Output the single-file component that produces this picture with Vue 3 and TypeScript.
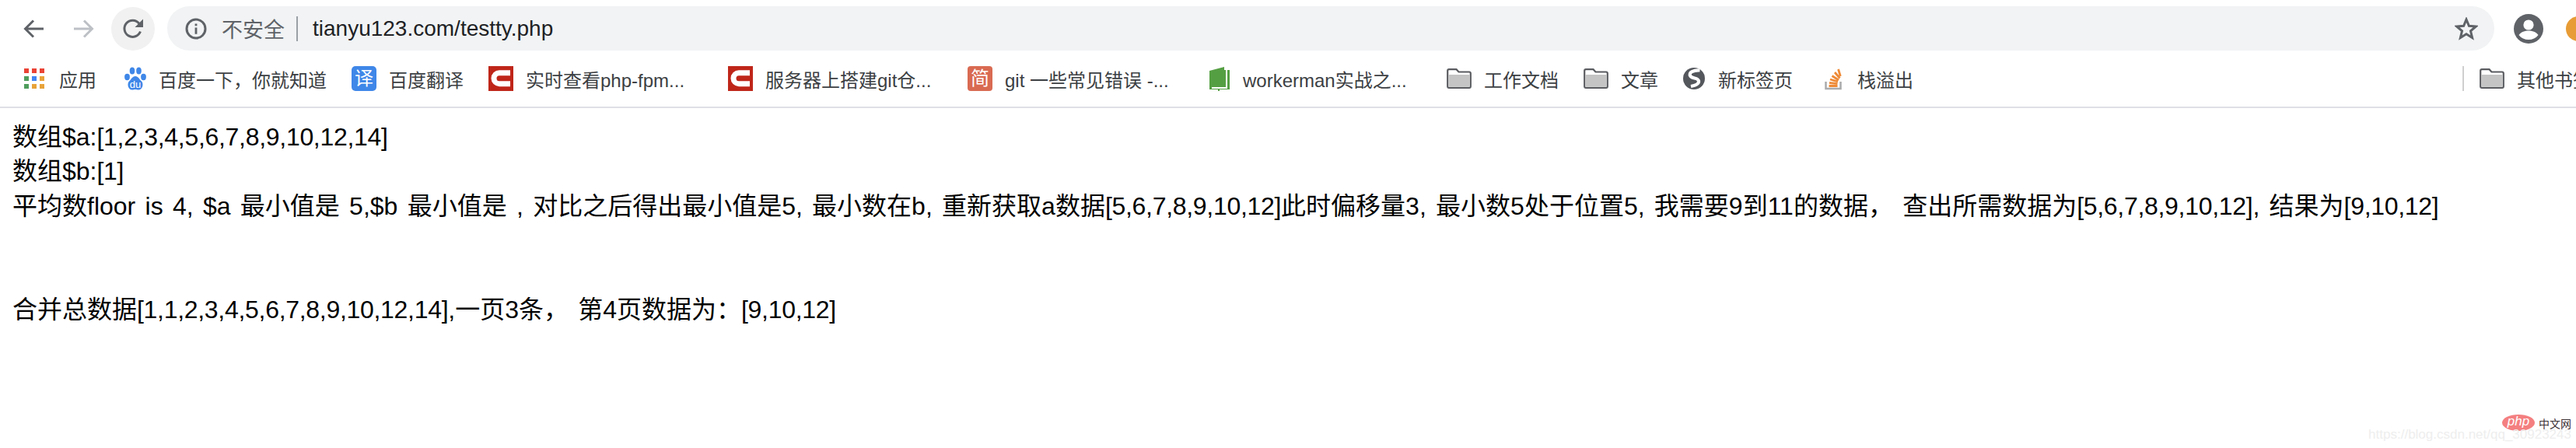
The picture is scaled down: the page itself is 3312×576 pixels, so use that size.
<template>
  <div class="window">
    <div class="toolbar">
      <button class="nav-btn">
        <svg width="28" height="28" viewBox="0 0 28 28"><path d="M26 14H3M13 3.5 2.5 14 13 24.5" fill="none" stroke="#5f6368" stroke-width="3" /></svg>
      </button>
      <button class="nav-btn">
        <svg width="28" height="28" viewBox="0 0 28 28"><path d="M2 14h23M15 3.5 25.5 14 15 24.5" fill="none" stroke="#bdc1c6" stroke-width="3" /></svg>
      </button>
      <button class="nav-btn reload">
        <svg width="28" height="28" viewBox="0 0 28 28">
          <path d="M23.5 17.5a10.6 10.6 0 1 1-1.6-10.3" fill="none" stroke="#5f6368" stroke-width="3" />
          <path d="M27 1.5V12H16.5z" fill="#5f6368" />
        </svg>
      </button>
      <div class="omnibox">
        <svg class="info" width="28" height="28" viewBox="0 0 28 28">
          <circle cx="14" cy="14" r="12" fill="none" stroke="#5f6368" stroke-width="3" />
          <path d="M12.6 12.5h2.8v8.2h-2.8zM12.6 7.4h2.8v2.8h-2.8z" fill="#5f6368" />
        </svg>
        <span class="insecure">不安全</span>
        <i class="divider"></i>
        <span class="url">tianyu123.com/testty.php</span>
        <svg class="star" width="30" height="30" viewBox="0 0 30 30">
          <path d="m15 3 3.4 8.3 8.9.7-6.8 5.8 2.1 8.7-7.6-4.7-7.6 4.7 2.1-8.7L2.7 12l8.9-.7z" fill="none" stroke="#5f6368" stroke-width="3" />
        </svg>
      </div>
      <svg class="avatar" width="38" height="38" viewBox="0 0 38 38">
        <circle cx="19" cy="19" r="19" fill="#5f6368" />
        <circle cx="19" cy="14" r="6.6" fill="#fff" />
        <path d="M6.5 27c2.5-4 8-5.6 12.5-5.6S29 23 31.500 27c-3 4-7.500 6-12.500 6s-9.500-2-12.500-6z" fill="#fff" />
      </svg>
      <div class="ext-dot"></div>
    </div>

    <div class="bookmarks">
      <div v-for="item in bookmarks" :key="item.label" class="bookmark" :style="{ width: item.width + 'px' }">
        <span class="bm-icon">
          <svg v-if="item.icon === 'apps'" class="apps" width="26" height="26" viewBox="0 0 26 26">
            <rect
              v-for="cell in appCells"
              :key="cell.x + '-' + cell.y"
              :x="cell.x"
              :y="cell.y"
              width="6"
              height="6"
              :fill="cell.color"
            />
          </svg>
          <svg v-else-if="item.icon === 'baidu'" width="28" height="32" viewBox="0 0 28 32">
            <g fill="#3f87e8">
              <ellipse cx="3.500" cy="14" rx="3.400" ry="4.200" />
              <ellipse cx="10" cy="6" rx="3.300" ry="4.500" />
              <ellipse cx="18.500" cy="6" rx="3.300" ry="4.500" />
              <ellipse cx="24.500" cy="14" rx="3.400" ry="4.200" />
              <path d="M14 13c4 0 5 4 8 6.500 3 3 1.500 11-4 11-1.500 0-2.500-.6-4-.6s-2.500.6-4 .6c-5.500 0-7-8-4-11C9 17 10 13 14 13z" />
            </g>
            <text x="14" y="28" text-anchor="middle" class="du">du</text>
          </svg>
          <span v-else-if="item.icon === 'fanyi'" class="fanyi">译</span>
          <svg v-else-if="item.icon === 'csdn'" width="32" height="32" viewBox="0 0 32 32">
            <rect width="32" height="32" fill="#bf2619" />
            <path d="M28 8.700H14a7 7 0 0 0 0 14h14" fill="none" stroke="#fff" stroke-width="7" />
          </svg>
          <span v-else-if="item.icon === 'jian'" class="jian">简</span>
          <svg v-else-if="item.icon === 'book'" width="28" height="32" viewBox="0 0 28 32">
            <path d="M1 6 20 1v4h2v22H1z" fill="#559f43" />
            <path d="M24 5h3v25H14v2h-2v-2H1v-3h23z" fill="#559f43" />
            <path d="M4 27h20v2H4z" fill="#fff" />
          </svg>
          <svg v-else-if="item.icon === 'folder'" width="32" height="26" viewBox="0 0 32 26">
            <path d="M1.200 3c0-1 .8-1.800 1.800-1.800h9.500L15.500 4.500H29c1 0 1.800.8 1.800 1.800V23c0 1-.8 1.800-1.800 1.800H3c-1 0-1.800-.8-1.800-1.800z" fill="#fff" stroke="#5a5c60" stroke-width="2.200" />
            <path d="M2.300 8h27.400v15.700H2.300z" fill="#c4c4c4" />
          </svg>
          <svg v-else-if="item.icon === 'globe'" width="30" height="30" viewBox="0 0 30 30">
            <circle cx="15" cy="15" r="14" fill="#54575c" />
            <path d="M22.500 4.500C15 4 7 7 10.500 12c2.500 3.500 9.500 1.500 10.500 6 .8 4-5 6-10 7" fill="none" stroke="#fff" stroke-width="4.200" />
          </svg>
          <svg v-else width="30" height="32" viewBox="0 0 30 32">
            <path d="M5.500 20v9h19v-9" fill="none" stroke="#aaabad" stroke-width="2.500" />
            <path d="M9.500 25.500h11M10 21.500l10.500 1.200M11 17l10 3M13.500 12.500l8.500 5.500M17 8l6.500 7.500M21.500 4l2.800 9" fill="none" stroke="#ee8a36" stroke-width="2.800" />
          </svg>
        </span>
        <span class="bm-label">{{ item.label }}</span>
      </div>
      <div class="bm-spacer"></div>
      <i class="bm-sep"></i>
      <div class="bookmark other">
        <span class="bm-icon">
          <svg width="32" height="26" viewBox="0 0 32 26">
            <path d="M1.200 3c0-1 .8-1.800 1.800-1.800h9.500L15.500 4.500H29c1 0 1.800.8 1.800 1.800V23c0 1-.8 1.800-1.800 1.800H3c-1 0-1.800-.8-1.800-1.800z" fill="#fff" stroke="#5a5c60" stroke-width="2.200" />
            <path d="M2.300 8h27.400v15.700H2.300z" fill="#c4c4c4" />
          </svg>
        </span>
        <span class="bm-label">其他书签</span>
      </div>
    </div>

    <div class="page">
      <div v-for="(line, idx) in lines" :key="idx" class="line">
        <span v-for="(seg, i) in splitLine(line)" :key="i" :class="{ nums: seg.startsWith('[') }">{{ seg }}</span>
      </div>
    </div>

    <div class="watermark">
      <div class="wm-logo">
        <span class="wm-php">php</span>
        <span class="wm-cn">中文网</span>
      </div>
      <div class="wm-url">https://blog.csdn.net/qq_30923243</div>
    </div>
  </div>
</template>

<script setup lang="ts">
interface Bookmark {
  label: string
  icon: string
  width: number
}

const bookmarks: Bookmark[] = [
  { label: '应用', icon: 'apps', width: 129 },
  { label: '百度一下，你就知道', icon: 'baidu', width: 292 },
  { label: '百度翻译', icon: 'fanyi', width: 176 },
  { label: '实时查看php-fpm...', icon: 'csdn', width: 308 },
  { label: '服务器上搭建git仓...', icon: 'csdn', width: 308 },
  { label: 'git 一些常见错误 -...', icon: 'jian', width: 310 },
  { label: 'workerman实战之...', icon: 'book', width: 306 },
  { label: '工作文档', icon: 'folder', width: 176 },
  { label: '文章', icon: 'folder', width: 127 },
  { label: '新标签页', icon: 'globe', width: 179 },
  { label: '栈溢出', icon: 'stack', width: 130 }
]

const appColors = ['#ea4335', '#ea4335', '#ea4335', '#4f9d5d', '#4285f4', '#e8a33a', '#4f9d5d', '#e8a33a', '#e8a33a']
const appCells = appColors.map((color, i) => ({
  x: (i % 3) * 10,
  y: Math.floor(i / 3) * 10,
  color
}))

const lines = [
  '数组$a:[1,2,3,4,5,6,7,8,9,10,12,14]',
  '数组$b:[1]',
  '平均数floor is 4, $a 最小值是 5,$b 最小值是 , 对比之后得出最小值是5, 最小数在b, 重新获取a数据[5,6,7,8,9,10,12]此时偏移量3, 最小数5处于位置5, 我需要9到11的数据， 查出所需数据为[5,6,7,8,9,10,12], 结果为[9,10,12]',
  '\u00a0',
  '\u00a0',
  '合并总数据[1,1,2,3,4,5,6,7,8,9,10,12,14],一页3条， 第4页数据为：[9,10,12]'
]

// bracketed number runs are set a little tighter than the rest of the text
const splitLine = (line: string) => line.split(/(\[[^\]]*\])/).filter(Boolean)
</script>

<style>
html,
body {
  margin: 0;
  background: #fff;
  overflow: hidden;
}
</style>

<style scoped>
.window {
  position: relative;
  width: 3312px;
  height: 576px;
  overflow: hidden;
  background: #fff;
  font-family: 'Liberation Sans', 'Noto Sans CJK SC', sans-serif;
}

.toolbar {
  display: flex;
  align-items: center;
  height: 57px;
  padding: 8px 0 0 16px;
}

.nav-btn {
  display: flex;
  flex: none;
  align-items: center;
  justify-content: center;
  width: 56px;
  height: 56px;
  padding: 0;
  margin-right: 8px;
  border: 0;
  border-radius: 50%;
  background: transparent;
}

.reload {
  background: #f1f1f1;
  margin-right: 16px;
}

.nav-btn:first-child {
  margin-right: 7px;
}

.omnibox {
  display: flex;
  flex: none;
  align-items: center;
  width: 2992px;
  height: 57px;
  box-sizing: border-box;
  padding: 0 21px 0 23px;
  border-radius: 29px;
  background: #f1f3f4;
}

.insecure {
  margin-left: 19px;
  font-size: 27px;
  color: #5f6368;
}

.divider {
  width: 2px;
  height: 32px;
  margin: 0 19px 0 15px;
  background: #9aa0a6;
}

.url {
  flex: 1;
  font-size: 28px;
  color: #202124;
}

.avatar {
  flex: none;
  margin-left: 25px;
}

.ext-dot {
  flex: none;
  width: 32px;
  height: 32px;
  margin-left: 29px;
  border-radius: 50%;
  background: #e89c35;
}

.bookmarks {
  display: flex;
  align-items: center;
  height: 72px;
  padding-left: 31px;
  border-bottom: 2px solid #dfe0e6;
}

.bookmark {
  display: flex;
  align-items: center;
  flex: none;
  gap: 16px;
  white-space: nowrap;
}

.bm-icon {
  display: flex;
  align-items: center;
  justify-content: center;
  flex: none;
  height: 32px;
}

.apps {
  margin-right: 3px;
}

.bm-label {
  font-size: 24px;
  color: #3c4043;
}

.bm-spacer {
  flex: 1;
}

.bm-sep {
  flex: none;
  width: 2px;
  height: 32px;
  margin-right: 20px;
  background: #cfcfcf;
}

.other {
  width: 124px;
  overflow: hidden;
}

.du {
  font-size: 13px;
  font-family: 'Liberation Sans', sans-serif;
  fill: #fff;
}

.fanyi {
  display: block;
  width: 32px;
  height: 32px;
  border-radius: 5px;
  background: #3f87e8;
  color: #fff;
  font-size: 24px;
  line-height: 32px;
  text-align: center;
}

.jian {
  display: block;
  width: 32px;
  height: 32px;
  border-radius: 4px;
  background: #d96a52;
  color: #fff;
  font-size: 24px;
  line-height: 32px;
  text-align: center;
}

.page {
  padding: 15px 0 0 16px;
}

.line {
  font-size: 32px;
  line-height: 44.4px;
  color: #000;
  white-space: pre;
  word-spacing: 3.4px;
}

.nums {
  letter-spacing: -0.3px;
}

.watermark {
  position: absolute;
  right: 6px;
  bottom: 8px;
  text-align: right;
}

.wm-logo {
  display: flex;
  align-items: center;
  justify-content: flex-end;
  gap: 5px;
  height: 21px;
}

.wm-php {
  width: 42px;
  height: 21px;
  border-radius: 50%;
  background: #f47f80;
  color: #fff;
  font-size: 17px;
  font-style: italic;
  line-height: 18px;
  text-align: center;
}

.wm-cn {
  font-size: 14px;
  color: #3a3034;
}

.wm-url {
  margin-top: -4px;
  font-size: 17px;
  line-height: 18px;
  color: #eeeeee;
}
</style>
